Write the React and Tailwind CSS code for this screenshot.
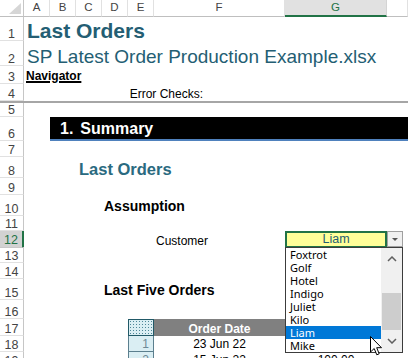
import React from "react";

const cols = "grid grid-cols-[24px_26px_26px_26px_26px_26px_131px_102px_1fr]";

const Row = ({ n, h, active, children }) => (
  <div className={`${cols} ${h}`}>
    <div
      className={
        active
          ? "flex items-end justify-center pb-0 text-[12.5px] leading-none bg-[#d2d2d2] text-[#217346] border-r-2 border-r-[#217346] border-b border-b-[#c8c8c8]"
          : "flex items-end justify-center pb-0 text-[12.5px] leading-none text-[#444] border-r border-r-[#c6c6c6] border-b border-b-[#e1e1e1]"
      }
    >
      {n}
    </div>
    {children}
  </div>
);

const letters = ["A", "B", "C", "D", "E", "F", "G", ""];
const items = ["Foxtrot", "Golf", "Hotel", "Indigo", "Juliet", "Kilo", "Liam", "Mike"];

export default function App() {
  return (
    <div className="relative w-[408px] h-[358px] overflow-hidden bg-white font-['Liberation_Sans',Arial,sans-serif] text-black">
      {/* column headers */}
      <div className={`${cols} h-[17px]`}>
        <div className="border-r border-r-[#c6c6c6] border-b border-b-[#bfbfbf]">
          <svg width="23" height="16" viewBox="0 0 23 16">
            <polygon points="21,3 21,14 9,14" fill="#d6d6d6" />
          </svg>
        </div>
        {letters.map((l) =>
          l === "G" ? (
            <div
              key={l}
              className="flex items-center justify-center text-[11.5px] leading-none text-[#217346] bg-[#e1e1e1] border-r border-r-[#d4d4d4] border-b-2 border-b-[#217346]"
            >
              {l}
            </div>
          ) : (
            <div
              key={l || "H"}
              className="flex items-center justify-center text-[11.5px] leading-none text-[#444] border-r border-r-[#e1e1e1] border-b border-b-[#bfbfbf]"
            >
              {l}
            </div>
          )
        )}
      </div>

      <Row n="1" h="h-[24px]">
        <div className="col-start-2 col-span-8 flex items-end pl-[3px] whitespace-nowrap text-[21px] leading-none font-bold text-[#245e73]">
          Last Orders
        </div>
      </Row>
      <Row n="2" h="h-[25px]">
        <div className="col-start-2 col-span-8 flex items-end pl-[3px] whitespace-nowrap text-[19px] leading-none text-[#245e73]">
          SP Latest Order Production Example.xlsx
        </div>
      </Row>
      <Row n="3" h="h-[18px]">
        <div className="col-start-2 col-span-4 flex items-end pb-[2px] pl-[2px] text-[12px] leading-none font-bold underline decoration-[1.5px]">
          Navigator
        </div>
      </Row>
      <Row n="4" h="h-[17px]">
        <div className="col-start-2 col-span-6 flex items-end justify-end pb-px pr-[82px] text-[12px] leading-none">
          Error Checks:
        </div>
      </Row>
      <div className="h-[2px] bg-[#a6a6a6]" />
      <Row n="5" h="h-[14px]" />
      <Row n="6" h="h-[24px]">
        <div className="col-start-3 col-span-7 flex items-end pb-[2px] pl-[10px] bg-black border-b-2 border-b-[#4f81bd] text-white text-[16px] leading-none font-bold">
          <span>1.</span>
          <span className="ml-[7px]">Summary</span>
        </div>
      </Row>
      <Row n="7" h="h-[16px]" />
      <Row n="8" h="h-[21px]">
        <div className="col-start-4 col-span-5 flex items-end pb-px pl-[3px] whitespace-nowrap text-[16.5px] leading-none font-bold text-[#2a6a80]">
          Last Orders
        </div>
      </Row>
      <Row n="9" h="h-[17px]" />
      <Row n="10" h="h-[21px]">
        <div className="col-start-5 col-span-4 flex items-end pb-[3px] pl-[2px] text-[14px] leading-none font-bold">
          Assumption
        </div>
      </Row>
      <Row n="11" h="h-[15px]" />
      <Row n="12" h="h-[16px]" active>
        <div className="col-start-7 flex items-end pb-px pl-[2px] text-[12px] leading-none">
          Customer
        </div>
        <div className="col-start-8 flex items-end justify-center pb-0 bg-[#ffff99] border-2 border-[#217346] text-[12.5px] leading-none text-[#245e73]">
          Liam
        </div>
      </Row>
      <Row n="13" h="h-[16px]" />
      <Row n="14" h="h-[16px]" />
      <Row n="15" h="h-[21px]">
        <div className="col-start-5 col-span-4 flex items-end pb-[3px] pl-[2px] text-[14px] leading-none font-bold">
          Last Five Orders
        </div>
      </Row>
      <Row n="16" h="h-[19px]" />
      <Row n="17" h="h-[17px]">
        <div className="col-start-6 border border-[#215967] bg-[#daeef3] bg-[radial-gradient(#4f8798_0.7px,transparent_0.8px)] bg-[length:3px_3px]" />
        <div className="col-start-7 flex items-end justify-center pb-px bg-[#808080] text-white text-[12px] leading-none font-bold">
          Order Date
        </div>
        <div className="col-start-8 bg-[#808080]" />
      </Row>
      <Row n="18" h="h-[16px]">
        <div className="col-start-6 flex items-end justify-end pb-[1px] pr-[4px] bg-[#daeef3] border-x border-b border-[#5b7f8e] text-[12px] leading-none text-[#6e8996]">
          1
        </div>
        <div className="col-start-7 flex items-end justify-center pb-[2px] text-[12px] leading-none">
          23 Jun 22
        </div>
      </Row>
      <Row n="19" h="h-[16px]">
        <div className="col-start-6 flex items-end justify-end pb-[1px] pr-[4px] bg-[#daeef3] border-x border-b border-[#5b7f8e] text-[12px] leading-none text-[#6e8996]">
          2
        </div>
        <div className="col-start-7 flex items-end justify-center pb-[2px] text-[12px] leading-none">
          15 Jun 22
        </div>
        <div className="col-start-8 flex items-end justify-center pb-[2px] text-[12px] leading-none">
          100.00
        </div>
      </Row>

      {/* validation dropdown button */}
      <div className="absolute left-[387px] top-[231px] w-[16px] h-[16px] bg-[#f0f0f0] border border-[#a0a0a0] flex items-center justify-center">
        <svg width="8" height="5" viewBox="0 0 8 5">
          <polygon points="1,1 7,1 4,4" fill="#555" />
        </svg>
      </div>

      {/* dropdown list */}
      <div className="absolute left-[285px] top-[247px] w-[118px] h-[106px] bg-white border border-[#3c3c3c] flex font-['Noto_Sans','DejaVu_Sans',sans-serif] text-[11px]">
        <div className="flex-1 flex flex-col">
          {items.map((it) => (
            <div
              key={it}
              className={
                it === "Liam"
                  ? "h-[13px] leading-[13px] pl-[4px] bg-[#0078d7] text-white"
                  : "h-[13px] leading-[13px] pl-[4px] text-black"
              }
            >
              {it}
            </div>
          ))}
        </div>
        <div className="w-[21px] bg-[#f0f0f0] flex flex-col">
          <div className="h-[22px] flex items-center justify-center">
            <svg width="10" height="6" viewBox="0 0 10 6">
              <polyline points="1,5 5,1 9,5" fill="none" stroke="#606060" strokeWidth="1.5" />
            </svg>
          </div>
          <div className="flex-1 flex flex-col justify-end px-px">
            <div className="h-[37px] bg-[#cdcdcd]" />
          </div>
          <div className="h-[22px] flex items-center justify-center">
            <svg width="10" height="6" viewBox="0 0 10 6">
              <polyline points="1,1 5,5 9,1" fill="none" stroke="#606060" strokeWidth="1.5" />
            </svg>
          </div>
        </div>
      </div>

      {/* mouse pointer */}
      <svg className="absolute left-[370px] top-[336px]" width="13" height="21" viewBox="0 0 13 21">
        <polygon
          points="0.5,0.5 0.5,16 4.2,12.5 6.8,18.8 9.2,17.8 6.7,11.7 11.5,11.7"
          fill="white"
          stroke="black"
          strokeWidth="1"
          strokeLinejoin="round"
        />
      </svg>
    </div>
  );
}
